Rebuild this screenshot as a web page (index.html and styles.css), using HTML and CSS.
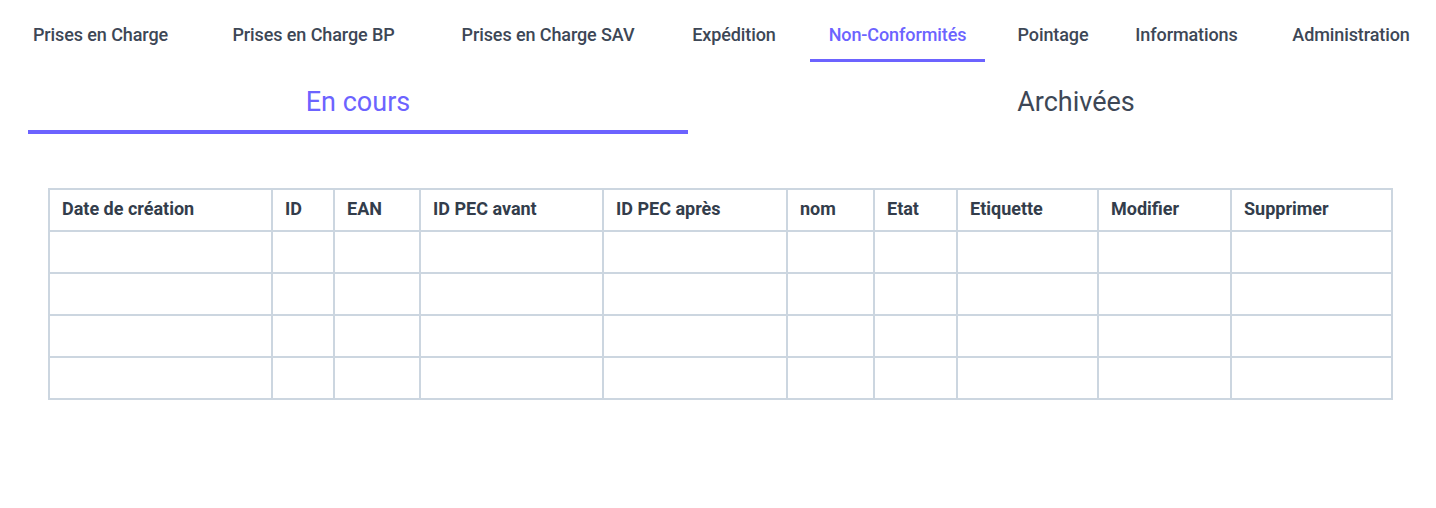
FILE: index.html
```html
<!DOCTYPE html>
<html lang="fr">
<head>
<meta charset="utf-8">
<title>Non-Conformités</title>
<link rel="stylesheet" href="styles.css">
</head>
<body>
<nav class="topnav">
  <a class="nav-item">Prises en Charge</a>
  <a class="nav-item">Prises en Charge BP</a>
  <a class="nav-item">Prises en Charge SAV</a>
  <a class="nav-item">Expédition</a>
  <a class="nav-item active">Non-Conformités</a>
  <a class="nav-item">Pointage</a>
  <a class="nav-item">Informations</a>
  <a class="nav-item nav-last">Administration</a>
</nav>
<div class="tabs">
  <div class="tab active">En cours</div>
  <div class="tab">Archivées</div>
</div>
<main class="content">
  <table class="grid">
    <colgroup>
      <col class="c1"><col class="c2"><col class="c3"><col class="c4"><col class="c5">
      <col class="c6"><col class="c7"><col class="c8"><col class="c9"><col class="c10">
    </colgroup>
    <thead>
      <tr>
        <th>Date de création</th><th>ID</th><th>EAN</th><th>ID PEC avant</th><th>ID PEC après</th>
        <th>nom</th><th>Etat</th><th>Etiquette</th><th>Modifier</th><th>Supprimer</th>
      </tr>
    </thead>
    <tbody>
      <tr><td></td><td></td><td></td><td></td><td></td><td></td><td></td><td></td><td></td><td></td></tr>
      <tr><td></td><td></td><td></td><td></td><td></td><td></td><td></td><td></td><td></td><td></td></tr>
      <tr><td></td><td></td><td></td><td></td><td></td><td></td><td></td><td></td><td></td><td></td></tr>
      <tr><td></td><td></td><td></td><td></td><td></td><td></td><td></td><td></td><td></td><td></td></tr>
    </tbody>
  </table>
</main>
</body>
</html>
```
FILE: styles.css
```css
* { box-sizing: border-box; }
html, body { margin: 0; padding: 0; background: #fff; }
body {
  font-family: Roboto, "Liberation Sans", sans-serif;
  color: #3d4756;
}
.topnav {
  display: grid;
  grid-template-columns: 177px 249px 220px 152px 175px 136px 131px 184px;
  padding-left: 12px;
  height: 62px;
}
.nav-item {
  display: flex;
  align-items: center;
  justify-content: center;
  font-size: 18px;
  font-weight: 500;
  letter-spacing: -0.1px;
  color: #3d4756;
  padding-top: 10px;
  border-bottom: 3px solid transparent;
  white-space: nowrap;
}
.nav-last {
  padding-left: 14px;
}
.nav-item.active {
  color: #6c63ff;
  border-bottom-color: #6c63ff;
}
.tabs {
  display: flex;
  gap: 58px;
  padding: 0 30px 0 28px;
  height: 72px;
}
.tab {
  flex: 1;
  display: flex;
  align-items: center;
  justify-content: center;
  font-size: 27px;
  font-weight: 400;
  color: #3d4756;
  border-bottom: 4px solid transparent;
  padding-top: 12px;
}
.tab.active {
  color: #6c63ff;
  border-bottom-color: #6c63ff;
}
.content {
  padding: 54px 0 0 48px;
}
.grid {
  border-collapse: collapse;
  table-layout: fixed;
  width: 1343px;
}
.grid th, .grid td {
  border: 2px solid #ccd6e0;
  height: 42px;
  padding: 0 12px;
  text-align: left;
}
.grid th {
  font-size: 18px;
  font-weight: 700;
  color: #333d4b;
  white-space: nowrap;
  padding-bottom: 3px;
}
.c1 { width: 223px; }
.c2 { width: 62px; }
.c3 { width: 86px; }
.c4 { width: 183px; }
.c5 { width: 184px; }
.c6 { width: 87px; }
.c7 { width: 83px; }
.c8 { width: 141px; }
.c9 { width: 133px; }
.c10 { width: 161px; }
```
